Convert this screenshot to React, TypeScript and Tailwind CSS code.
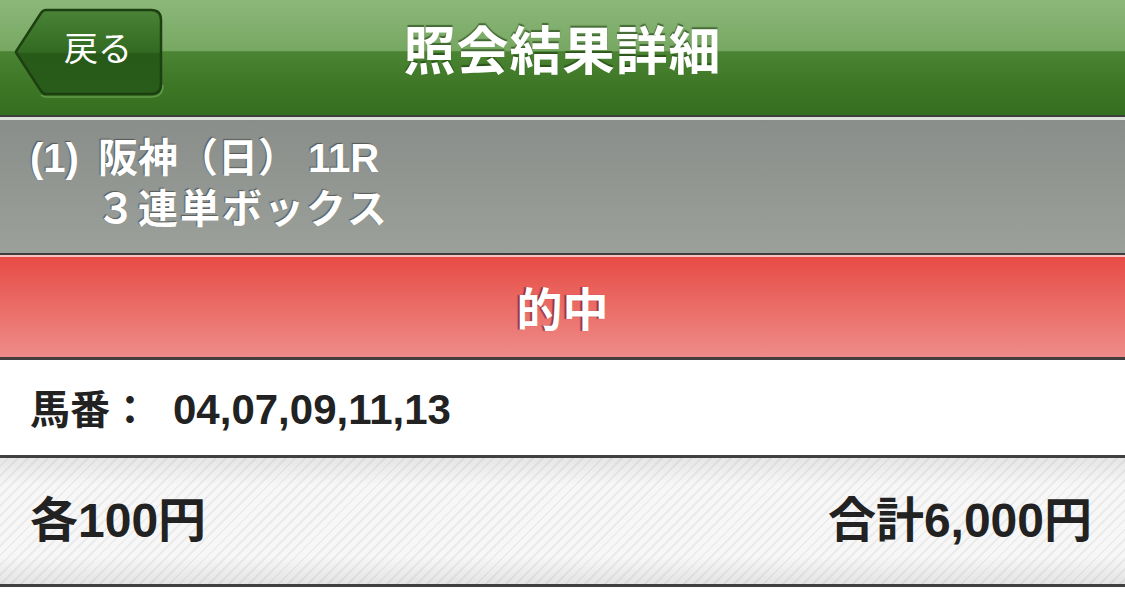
import React from "react";

const font = { fontFamily: '"Liberation Sans", "Noto Sans CJK JP", sans-serif' };

function BackButton() {
  return (
    <div className="absolute left-[13px] top-[6px] w-[152px] h-[92px] flex items-center justify-center">
      <svg className="absolute inset-0" width="152" height="92" viewBox="0 0 152 92">
        <defs>
          <linearGradient id="bb" x1="0" y1="0" x2="0" y2="1">
            <stop offset="0" stopColor="#4a8337" />
            <stop offset="0.5" stopColor="#336a22" />
            <stop offset="0.52" stopColor="#275a18" />
            <stop offset="1" stopColor="#295c1a" />
          </linearGradient>
        </defs>
        <path
          d="M33 4 L138 4 Q148 4 148 14 L148 78 Q148 88 138 88 L33 88 Q30 88 28 85 L4 48 Q2 46 4 44 L28 7 Q30 4 33 4 Z"
          fill="url(#bb)"
          stroke="#1c400f"
          strokeWidth="2.5"
        />
        <path
          d="M28 89 Q30 91 33 91 L138 91 Q150 91 150 79"
          fill="none"
          stroke="#6da252"
          strokeWidth="1.5"
          opacity="0.8"
        />
      </svg>
      <span className="relative text-white text-[34px] ml-[18px] mb-[6px] leading-none" style={font}>
        戻る
      </span>
    </div>
  );
}

export default function App() {
  return (
    <div className="w-[1125px] h-[594px] bg-white overflow-hidden" style={font}>
      {/* header */}
      <div className="relative h-[115px] flex items-center justify-center bg-[linear-gradient(to_bottom,#8cb87a_0%,#77a862_44%,#4b8433_45%,#3d7726_75%,#356e1f_100%)]">
        <BackButton />
        <div className="text-white font-bold text-[52px] leading-none tracking-[1px] [text-shadow:0_-2px_1px_rgba(20,50,10,0.55)] mb-[12px]">
          照会結果詳細
        </div>
      </div>
      <div className="h-[2px] bg-[#3c3f3c]" />
      <div className="h-[3px] bg-[#dde2dd]" />

      {/* gray info */}
      <div className="h-[133px] bg-[linear-gradient(to_bottom,#8a8e8a,#9ba09b)] pl-[30px] pt-[14px] text-white font-bold text-[40px] [text-shadow:-1px_-1px_1px_rgba(40,40,40,0.55)]">
        <div className="flex items-baseline leading-[48px]">
          <span>(1)</span>
          <span className="ml-[19px]">阪神（日）</span>
          <span className="ml-[10px]">11R</span>
        </div>
        <div className="pl-[66px] leading-[54px] tracking-[2px]">３連単ボックス</div>
      </div>
      <div className="h-[2px] bg-[#3f3c3c]" />
      <div className="h-[2px] bg-[#f7c4c4]" />

      {/* hit */}
      <div className="h-[100px] flex items-center justify-center bg-[linear-gradient(to_bottom,#e74c45,#ee8c89)]">
        <span className="text-white font-bold text-[46px] leading-none mt-[6px] [text-shadow:-2px_0_1px_rgba(110,20,20,0.65)]">
          的中
        </span>
      </div>
      <div className="h-[3px] bg-[#443f3f]" />

      {/* horse numbers */}
      <div className="h-[95px] bg-white flex items-center pl-[30px] text-[#222] font-bold">
        <span className="text-[40px] leading-none mt-[4px]">馬番：</span>
        <span className="text-[42px] leading-none ml-[23px] mt-[4px]">04,07,09,11,13</span>
      </div>
      <div className="h-[3px] bg-[#404040]" />

      {/* amounts */}
      <div className="h-[126px] flex items-center justify-between pl-[30px] pr-[33px] text-[#222] font-bold bg-[linear-gradient(to_bottom,rgba(0,0,0,0.07),rgba(0,0,0,0)_22%,rgba(0,0,0,0)_78%,rgba(0,0,0,0.08)),repeating-linear-gradient(135deg,#f7f7f7_0px,#f7f7f7_5px,#ebebeb_5px,#ebebeb_7px)]">
        <span className="text-[48px] leading-none">各100円</span>
        <span className="text-[48px] leading-none">合計6,000円</span>
      </div>
      <div className="h-[3px] bg-[#404040]" />
    </div>
  );
}
